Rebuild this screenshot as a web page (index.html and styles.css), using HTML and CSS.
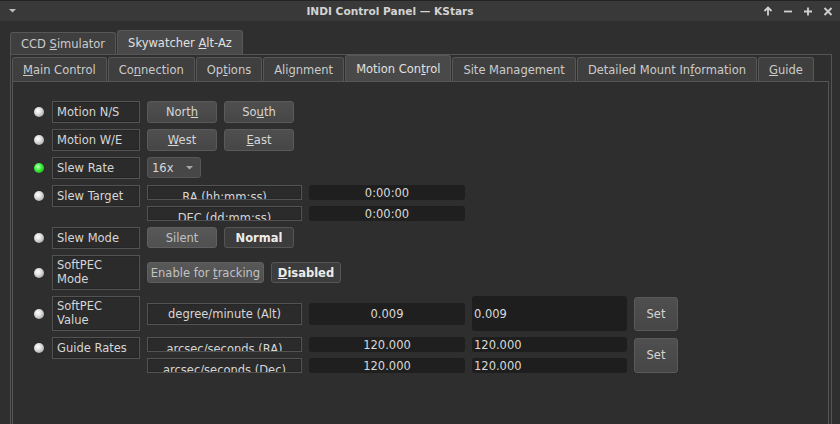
FILE: index.html
```html
<!DOCTYPE html>
<html lang="en">
<head>
<meta charset="utf-8">
<title>INDI Control Panel — KStars</title>
<link rel="stylesheet" href="styles.css">
</head>
<body>
<div class="window">
  <header class="titlebar">
    <div class="tb-left">
      <svg class="menu-caret" width="7" height="4" viewBox="0 0 7 4"><polygon points="0,0 7,0 3.5,3.5"/></svg>
    </div>
    <div class="title">INDI Control Panel — KStars</div>
    <div class="tb-right">
      <svg class="wbtn" viewBox="0 0 10 10"><path d="M5 9.5V1.5M1.5 5 5 1.5 8.5 5"/></svg>
      <svg class="wbtn" viewBox="0 0 10 10"><path d="M1 5.5H9"/></svg>
      <svg class="wbtn" viewBox="0 0 10 10"><path d="M1 5.5H9M5 1.5V9.5"/></svg>
      <svg class="wbtn" viewBox="0 0 10 10"><path d="M1.5 2 8.5 9M8.5 2 1.5 9"/></svg>
    </div>
  </header>

  <main class="client">
    <nav class="tabs outer-tabs">
      <div class="tab"><span>CCD <u>S</u>imulator</span></div>
      <div class="tab active"><span>Skywatcher <u>A</u>lt-Az</span></div>
    </nav>
    <section class="outer-pane">
      <nav class="tabs inner-tabs">
        <div class="tab"><span><u>M</u>ain Control</span></div>
        <div class="tab"><span>Co<u>n</u>nection</span></div>
        <div class="tab"><span>Op<u>t</u>ions</span></div>
        <div class="tab"><span>Ali<u>g</u>nment</span></div>
        <div class="tab active"><span>Motion Con<u>t</u>rol</span></div>
        <div class="tab"><span>Site Management</span></div>
        <div class="tab"><span>Detailed Mount In<u>f</u>ormation</span></div>
        <div class="tab"><span><u>G</u>uide</span></div>
      </nav>
      <section class="inner-pane">
        <div class="props">

          <div class="prop">
            <div class="head"><span class="led"></span><span class="label">Motion N/S</span></div>
            <div class="body">
              <div class="btn"><span>Nort<u>h</u></span></div>
              <div class="btn"><span>So<u>u</u>th</span></div>
            </div>
          </div>

          <div class="prop">
            <div class="head"><span class="led"></span><span class="label">Motion W/E</span></div>
            <div class="body">
              <div class="btn"><span><u>W</u>est</span></div>
              <div class="btn"><span><u>E</u>ast</span></div>
            </div>
          </div>

          <div class="prop">
            <div class="head"><span class="led ok"></span><span class="label">Slew Rate</span></div>
            <div class="body">
              <div class="combo"><span>16x</span><svg class="caret" width="7" height="4" viewBox="0 0 7 4"><polygon points="0,0 7,0 3.5,3.5"/></svg></div>
            </div>
          </div>

          <div class="prop">
            <div class="head"><span class="led"></span><span class="label">Slew Target</span></div>
            <div class="body stack">
              <div class="sub"><div class="name clip">RA (hh:mm:ss)</div><div class="val short">0:00:00</div></div>
              <div class="sub"><div class="name clip">DEC (dd:mm:ss)</div><div class="val short">0:00:00</div></div>
            </div>
          </div>

          <div class="prop">
            <div class="head"><span class="led"></span><span class="label">Slew Mode</span></div>
            <div class="body">
              <div class="btn off"><span>Silent</span></div>
              <div class="btn on"><span>Normal</span></div>
            </div>
          </div>

          <div class="prop mid">
            <div class="head"><span class="led"></span><span class="label two"><span>SoftPEC<br>Mode</span></span></div>
            <div class="body">
              <div class="btn off wide"><span>Enable for <u>t</u>racking</span></div>
              <div class="btn on"><span><u>D</u>isabled</span></div>
            </div>
          </div>

          <div class="prop mid">
            <div class="head"><span class="led"></span><span class="label two"><span>SoftPEC<br>Value</span></span></div>
            <div class="body center">
              <div class="name">degree/minute (Alt)</div>
              <div class="val">0.009</div>
              <div class="inp">0.009</div>
              <div class="btn set"><span>Set</span></div>
            </div>
          </div>

          <div class="prop">
            <div class="head"><span class="led"></span><span class="label">Guide Rates</span></div>
            <div class="body center">
              <div class="stack">
                <div class="sub"><div class="name clip">arcsec/seconds (RA)</div><div class="val short">120.000</div><div class="inp short">120.000</div></div>
                <div class="sub"><div class="name clip">arcsec/seconds (Dec)</div><div class="val short">120.000</div><div class="inp short">120.000</div></div>
              </div>
              <div class="btn set tall"><span>Set</span></div>
            </div>
          </div>

        </div>
      </section>
    </section>
  </main>
</div>
</body>
</html>
```

FILE: styles.css
```css
* { box-sizing: border-box; }

html, body { margin: 0; padding: 0; }

body {
  width: 840px;
  height: 424px;
  overflow: hidden;
  background: #2f2f2f;
  font-family: "DejaVu Sans", "Liberation Sans", sans-serif;
  font-size: 11.5px;
  color: #d4d4d4;
}

u { text-decoration: underline; text-underline-offset: 1px; }

.window {
  height: 424px;
  display: flex;
  flex-direction: column;
}

/* ---------- title bar ---------- */
.titlebar {
  height: 21px;
  flex: none;
  display: flex;
  align-items: center;
  background: #393939;
  border-top: 1px solid #232323;
}
.tb-left {
  width: 20px;
  padding-left: 9px;
  display: flex;
  align-items: center;
}
.menu-caret polygon { fill: #bdbdbd; }
.title {
  flex: 1;
  text-align: center;
  font-weight: bold;
  font-size: 10.6px;
  color: #d3d3d3;
}
.tb-right {
  width: 80px;
  padding-left: 3px;
  display: flex;
  align-items: center;
  gap: 10px;
}
.wbtn {
  width: 10px;
  height: 10px;
  fill: none;
  stroke: #d0d0d0;
  stroke-width: 1.8;
}

/* ---------- tabs ---------- */
.client {
  flex: 1;
  min-height: 0;
  padding: 9px 8px 0 10px;
  display: flex;
  flex-direction: column;
}
.tabs {
  display: flex;
  align-items: flex-end;
  gap: 1px;
  flex: none;
}
.tab {
  height: 22px;
  padding: 0 10px;
  display: flex;
  align-items: center;
  white-space: nowrap;
  background: #3f3f3f;
  border: 1px solid #575757;
  border-bottom: none;
  border-radius: 3px 3px 0 0;
  color: #cbcbcb;
}
.tab.active {
  background: #494949;
  color: #e0e0e0;
}
.outer-tabs { height: 24px; }
.outer-tabs .tab.active { height: 24px; }

.outer-pane {
  flex: 1;
  min-height: 0;
  border: 1px solid #555555;
  border-bottom: none;
  padding: 0 2px 0 1px;
  display: flex;
  flex-direction: column;
}
.inner-tabs { height: 26px; }
.inner-tabs .tab { height: 24px; }
.inner-tabs .tab.active { height: 26px; }

.inner-pane {
  flex: 1;
  min-height: 0;
  border: 1px solid #555555;
  border-bottom: none;
  background: #2e2e2e;
  padding: 19px 0 0 13px;
}

/* ---------- property rows ---------- */
.props {
  display: flex;
  flex-direction: column;
  gap: 6px;
}
.prop {
  display: flex;
  align-items: flex-start;
  gap: 7px;
}
.prop.mid { align-items: center; }

.head {
  display: flex;
  align-items: center;
}
.led {
  width: 10px;
  height: 10px;
  margin: 0 8px;
  border-radius: 50%;
  background: radial-gradient(circle at 40% 38%, #ffffff 0%, #e2e2e2 35%, #a6a6a6 80%, #888888 100%);
}
.led.ok {
  background: radial-gradient(circle at 40% 38%, #c8ffc8 0%, #3cf23c 40%, #1fb51f 80%, #138a13 100%);
}
.label {
  width: 88px;
  height: 22px;
  display: flex;
  align-items: center;
  padding-left: 4px;
  border: 1px solid #535353;
  box-shadow: inset 0 0 0 1px #262626;
  background: #2b2b2b;
  white-space: nowrap;
  color: #d6d6d6;
}
.label.two {
  height: 35px;
  line-height: 13.5px;
}

.body {
  display: flex;
  gap: 7px;
}
.body.center { align-items: center; }
.stack {
  display: flex;
  flex-direction: column;
  gap: 6px;
}
.sub {
  display: flex;
  gap: 7px;
}

.btn {
  width: 70px;
  height: 22px;
  display: flex;
  align-items: center;
  justify-content: center;
  border: 1px solid #5a5a5a;
  border-radius: 3px;
  background: linear-gradient(#4f4f4f, #464646);
  color: #d6d6d6;
  white-space: nowrap;
}
.btn.off {
  height: 21px;
  background: linear-gradient(#585858, #505050);
  border-color: #606060;
  color: #c2c2c2;
}
.btn.on {
  height: 21px;
  background: #3c3c3c;
  border-color: #555555;
  color: #ececec;
  font-weight: bold;
}
.btn.wide { width: 117px; }
.btn.set { width: 44px; height: 34px; }
.btn.set.tall { height: 35px; }

.combo {
  width: 54px;
  height: 21px;
  display: flex;
  align-items: center;
  justify-content: space-between;
  padding: 0 7px 0 4px;
  border: 1px solid #565656;
  border-radius: 3px;
  background: #474747;
  color: #d8d8d8;
}
.caret polygon { fill: #a8a8a8; }

.name {
  width: 155px;
  height: 22px;
  border: 1px solid #535353;
  box-shadow: inset 0 0 0 1px #262626;
  background: #2b2b2b;
  text-align: center;
  line-height: 20px;
  overflow: hidden;
  white-space: nowrap;
  color: #d6d6d6;
}
.name.clip {
  height: 15px;
  line-height: 23px;
}

.val {
  width: 156px;
  height: 22px;
  display: flex;
  align-items: center;
  justify-content: center;
  border-radius: 3px;
  background: #1f1f1f;
  color: #dadada;
}
.val.short { height: 15px; }

.inp {
  width: 155px;
  height: 35px;
  display: flex;
  align-items: center;
  padding-left: 2px;
  border-radius: 3px;
  background: #1e1e1e;
  color: #dadada;
}
.inp.short { height: 15px; }
```
